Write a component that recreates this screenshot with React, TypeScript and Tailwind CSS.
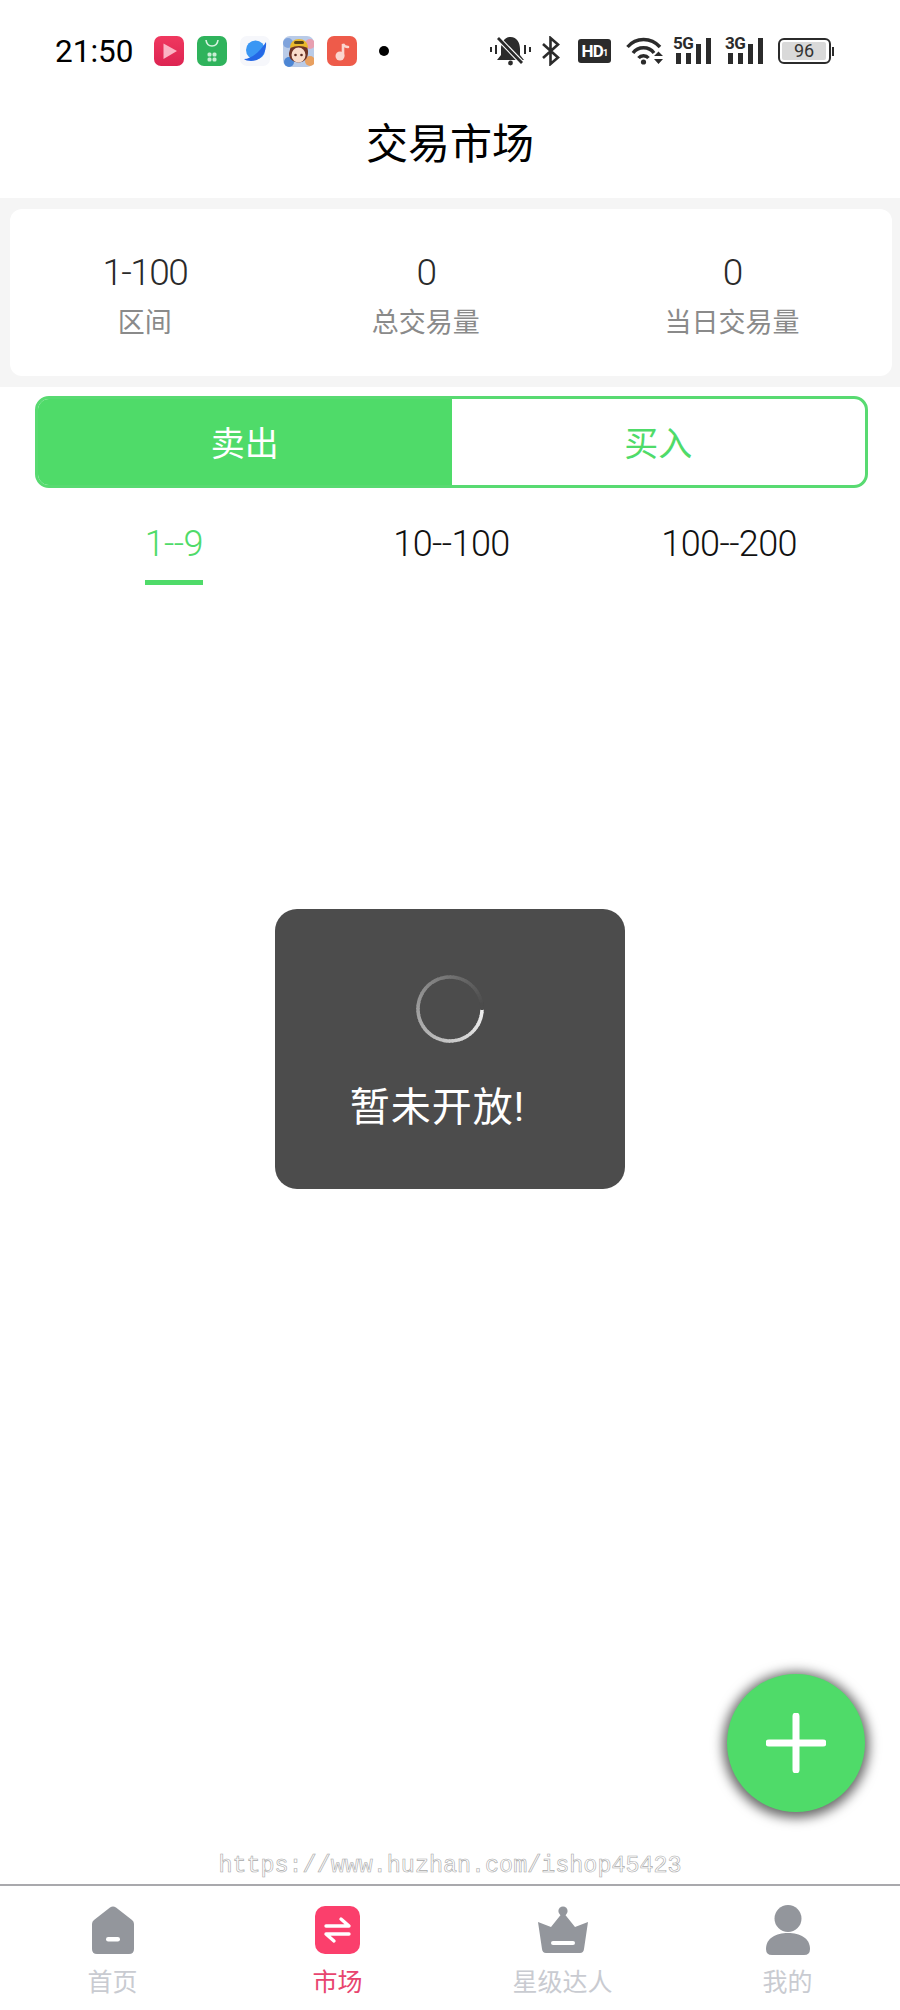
import React from "react";

const GREEN = "#4fdb69";

const stats = [
  { value: "1-100", label: "区间" },
  { value: "0", label: "总交易量" },
  { value: "0", label: "当日交易量" },
];

const ranges = ["1--9", "10--100", "100--200"];

function AppIcons() {
  return (
    <div className="ml-[21px] flex items-center gap-[13px]">
      <svg width="30" height="30" viewBox="0 0 30 30">
        <defs>
          <linearGradient id="vid" x1="0" y1="0" x2="0" y2="1">
            <stop offset="0" stopColor="#f0385f" />
            <stop offset="1" stopColor="#dd2452" />
          </linearGradient>
        </defs>
        <rect width="30" height="30" rx="7" fill="url(#vid)" />
        <path d="M9.5 7.5 L23 15 L9.5 23 Z" fill="#fbb4c4" strokeLinejoin="round" />
      </svg>
      <svg width="30" height="30" viewBox="0 0 30 30">
        <rect width="30" height="30" rx="7" fill="#2fb35c" />
        <path d="M9 4 C10 12 20 12 21 4" fill="none" stroke="#d8f3e0" strokeWidth="1.6" />
        <rect x="10.5" y="16.5" width="4" height="4" rx="1.5" fill="#c9eed5" />
        <rect x="15.5" y="16.5" width="4" height="4" rx="1.5" fill="#c9eed5" />
        <rect x="10.5" y="21.5" width="4" height="4" rx="1.5" fill="#c9eed5" />
        <rect x="15.5" y="21.5" width="4" height="4" rx="1.5" fill="#c9eed5" />
      </svg>
      <svg width="30" height="30" viewBox="0 0 30 30">
        <rect width="30" height="30" rx="7" fill="#f6f7fb" />
        <circle cx="15.5" cy="14" r="9.5" fill="#3a97f4" />
        <path d="M4 23 C11 23 20 16 26 6 C27 15 22 25 11 25 C8 25 5 24 4 23 Z" fill="#2467e6" />
      </svg>
      <svg width="31" height="31" viewBox="0 0 31 31">
        <rect width="31" height="31" rx="7" fill="#b9cbe8" />
        <circle cx="5" cy="7" r="5" fill="#7fa3dc" />
        <circle cx="27" cy="8" r="5" fill="#e79fb0" />
        <circle cx="6" cy="26" r="5" fill="#4c86d4" />
        <circle cx="27" cy="25" r="5" fill="#e8a060" />
        <path d="M6 17 C5 29 26 31 25 15 L24 10 L8 10 Z" fill="#6e3426" />
        <ellipse cx="15.5" cy="19" rx="7" ry="7.5" fill="#f9dccb" />
        <circle cx="12.5" cy="19" r="1.3" fill="#5b2a20" />
        <circle cx="18.5" cy="19" r="1.3" fill="#5b2a20" />
        <path d="M7 12 C7 0 25 0 25 12 Q16 8 7 12 Z" fill="#e9b92c" />
        <rect x="11" y="5" width="10" height="3" rx="1.5" fill="#5a4416" />
      </svg>
      <svg width="30" height="30" viewBox="0 0 30 30">
        <rect width="30" height="30" rx="7" fill="#ee5b4a" />
        <circle cx="13" cy="20" r="4.5" fill="#fbd5cf" />
        <path d="M16 20 V8 C17 10 19 11 21 11" fill="none" stroke="#fbd5cf" strokeWidth="2.6" strokeLinecap="round" />
      </svg>
      <span className="ml-[9px] h-[10px] w-[10px] rounded-full bg-black" />
    </div>
  );
}

function Signal({ label, className }: { label: string; className?: string }) {
  return (
    <div className={`relative h-[26px] w-[39px] ${className ?? ""}`}>
      <svg width="39" height="26" viewBox="0 0 39 26">
        <g fill="#2b2b2b">
          <rect x="3" y="15" width="5" height="11" />
          <rect x="13" y="15" width="5" height="11" />
          <rect x="23" y="6" width="5" height="20" />
          <rect x="33" y="0" width="5" height="26" />
        </g>
      </svg>
      <span className="absolute left-0 top-[-3px] text-[17px] font-bold leading-[17px] tracking-[-0.5px] text-[#2b2b2b]">
        {label}
      </span>
    </div>
  );
}

function SystemIcons() {
  return (
    <div className="flex items-center">
      <svg width="41" height="30" viewBox="0 0 41 30">
        <path d="M20.5 1 C27 1 30 7 30 13 V19 L34 24 H7 L11 19 V13 C11 7 14 1 20.5 1 Z" fill="#2b2b2b" />
        <circle cx="20.5" cy="27" r="2.4" fill="#2b2b2b" />
        <path d="M7 1 L33 28" stroke="#fff" strokeWidth="5" />
        <path d="M8 2 L32 27" stroke="#2b2b2b" strokeWidth="2.8" />
        <rect x="0" y="11" width="2" height="5" fill="#2b2b2b" />
        <rect x="5" y="9" width="2" height="9" fill="#2b2b2b" />
        <rect x="34" y="9" width="2" height="9" fill="#2b2b2b" />
        <rect x="39" y="11" width="2" height="5" fill="#2b2b2b" />
      </svg>
      <svg className="ml-[10px]" width="20" height="30" viewBox="0 0 20 30">
        <path d="M2 8 L17 21.5 L9.5 28 V2 L17 8.5 L2 22" fill="none" stroke="#2b2b2b" strokeWidth="2.6" />
      </svg>
      <div className="ml-[17px] flex h-[24px] w-[33px] items-center justify-center rounded-[3px] bg-[#2b2b2b] text-[17px] font-bold leading-none tracking-[-0.8px] text-white">
        HD<span className="mt-[4px] text-[9px]">1</span>
      </div>
      <svg className="ml-[15px]" width="38" height="28" viewBox="0 0 38 28">
        <g fill="none" stroke="#2b2b2b" strokeWidth="3.4">
          <path d="M1.5 10 C10 0 25 0 34 10" />
          <path d="M7 16 C12 9 23 9 28 16" />
          <path d="M12.5 21 C15 18 20 18 22.5 21" />
        </g>
        <circle cx="17.5" cy="25" r="2.6" fill="#2b2b2b" />
        <path d="M28 19 H37 L32.5 14.5 Z M28 22 H37 L32.5 27 Z" fill="#2b2b2b" />
      </svg>
      <Signal label="5G" className="ml-[9px]" />
      <Signal label="3G" className="ml-[13px]" />
      <div className="ml-[14px] flex items-center">
        <div className="flex h-[26px] w-[53px] items-center rounded-[6px] border-2 border-[#2b2b2b] p-[2px]">
          <span className="flex h-full w-[44px] items-center justify-center rounded-[2px] bg-[#d9d9d9] text-[18px] leading-none text-[#333]">
            96
          </span>
        </div>
        <span className="ml-[1px] h-[9px] w-[2px] bg-[#2b2b2b]" />
      </div>
    </div>
  );
}

function StatusBar() {
  return (
    <div className="flex h-[102px] items-center justify-between pl-[55px] pr-[66px]">
      <div className="flex items-center">
        <span className="pt-[2px] text-[31.5px] leading-none text-black">21:50</span>
        <AppIcons />
      </div>
      <SystemIcons />
    </div>
  );
}

// spinner is a ring that fades out going clockwise from 3 o'clock
function Spinner() {
  const count = 64;
  const r = 32;
  const arcs = Array.from({ length: count }, (_, i) => {
    const a0 = (i / count) * Math.PI * 2;
    const a1 = ((i + 1.3) / count) * Math.PI * 2;
    const t = Math.max(0, 1 - (i / count) * 1.03);
    const level = Math.round(0x4c + (0xf0 - 0x4c) * t);
    return {
      d: `M${40 + r * Math.cos(a0)} ${40 + r * Math.sin(a0)} A${r} ${r} 0 0 1 ${40 + r * Math.cos(a1)} ${40 + r * Math.sin(a1)}`,
      color: `rgb(${level},${level},${level})`,
    };
  });
  return (
    <svg width="80" height="80" viewBox="0 0 80 80">
      {arcs.map((arc, i) => (
        <path key={i} d={arc.d} fill="none" stroke={arc.color} strokeWidth="3.5" />
      ))}
    </svg>
  );
}

function Toast() {
  return (
    <div className="absolute left-[275px] top-[909px] flex h-[280px] w-[350px] flex-col items-center rounded-[22px] bg-[#4c4c4c] pt-[60px]">
      <Spinner />
      <span className="mr-[25px] mt-[34px] text-[40px] leading-[50px] tracking-[1px] text-white">暂未开放!</span>
    </div>
  );
}

function NavItem({ label, active, children }: { label: string; active?: boolean; children: React.ReactNode }) {
  return (
    <div className="flex flex-col items-center">
      <div className="flex h-[50px] items-center">{children}</div>
      <span className={`mt-[12px] text-[25px] leading-[32px] ${active ? "text-[#e8456f]" : "text-[#c9cbd1]"}`}>
        {label}
      </span>
    </div>
  );
}

function BottomNav() {
  return (
    <div className="grid h-[126px] grid-cols-4 border-t-2 border-[#a9a9ad] bg-white pt-[19px]">
      <NavItem label="首页">
        <svg width="44" height="48" viewBox="0 0 44 48">
          <path d="M19 1.5 Q22 -0.5 25 1.5 L41 14 Q43 15.5 43 18 V43 Q43 48 38 48 H6 Q1 48 1 43 V18 Q1 15.5 3 14 Z" fill="#93969c" />
          <rect x="15" y="31" width="14" height="4.5" rx="2.2" fill="#fff" />
        </svg>
      </NavItem>
      <NavItem label="市场" active>
        <svg width="45" height="48" viewBox="0 0 45 48">
          <rect width="45" height="48" rx="10" fill="#fb3f6c" />
          <g fill="none" stroke="#fff" strokeWidth="3.4" strokeLinecap="round" strokeLinejoin="round">
            <path d="M11 20 H34 L26 13" />
            <path d="M34 28 H11 L19 35" />
          </g>
        </svg>
      </NavItem>
      <NavItem label="星级达人">
        <svg width="50" height="48" viewBox="0 0 50 48">
          <circle cx="25" cy="5" r="4.6" fill="#93969c" />
          <path d="M0 16 L13 21 L25 6 L37 21 L50 16 L46 43 Q45.5 47 42 47 H8 Q4.5 47 4 43 Z" fill="#93969c" strokeLinejoin="round" />
          <rect x="13" y="35" width="24" height="4" rx="2" fill="#fff" />
        </svg>
      </NavItem>
      <NavItem label="我的">
        <svg width="44" height="50" viewBox="0 0 44 50">
          <circle cx="22" cy="13.5" r="13.5" fill="#93969c" />
          <path d="M0 44 C0 33 10 28 22 28 C34 28 44 33 44 44 Q44 50 38 50 H6 Q0 50 0 44 Z" fill="#93969c" />
        </svg>
      </NavItem>
    </div>
  );
}

export default function App() {
  return (
    <div className="relative flex h-[2010px] w-[900px] flex-col overflow-hidden bg-white font-['Roboto','Noto_Sans_CJK_SC',sans-serif]">
      <StatusBar />

      <div className="flex h-[96px] items-center justify-center pb-[10px]">
        <h1 className="text-[42px] leading-none text-black">交易市场</h1>
      </div>

      <div className="bg-[#f5f5f5] pb-[11px] pl-[10px] pr-[8px] pt-[11px]">
        <div className="flex h-[167px] items-center justify-around rounded-[12px] bg-white pt-[6px]">
          {stats.map((stat) => (
            <div key={stat.label} className="flex flex-col items-center">
              <span className="text-[37px] font-light leading-[44px] tracking-[-1.6px] text-[#2a2a2a]">{stat.value}</span>
              <span className="mt-[10px] text-[27px] leading-[36px] text-[#8a8a8a]">{stat.label}</span>
            </div>
          ))}
        </div>
      </div>

      <div className="ml-[35px] mr-[32px] mt-[9px] grid h-[92px] grid-cols-2 overflow-hidden rounded-[14px] border-[3px] border-[#58da71]">
        <div className="flex items-center justify-center bg-[#4fdb69] pt-[4px] text-[34px] text-white">卖出</div>
        <div className="flex items-center justify-center pt-[4px] text-[34px] text-[#4fdb69]">买入</div>
      </div>

      <div className="ml-[35px] mr-[32px] mt-[34px] grid grid-cols-3">
        {ranges.map((range, i) => (
          <div key={range} className="flex justify-center">
            <div className={`flex flex-col items-center border-b-[5px] pb-[14px] ${i === 0 ? "border-[#4fdb69]" : "border-transparent"}`}>
              <span className={`text-[36px] font-light leading-[44px] tracking-[-0.6px] ${i === 0 ? "text-[#4fdb69]" : "text-[#111]"}`}>{range}</span>
            </div>
          </div>
        ))}
      </div>

      <div className="flex flex-1 items-end justify-center pb-[2px]">
        <span className="font-['Liberation_Mono',monospace] text-[23.4px] leading-[32px] text-transparent [-webkit-text-stroke:0.6px_#a8a8a8]">
          https://www.huzhan.com/ishop45423
        </span>
      </div>

      <BottomNav />

      <Toast />

      <button
        type="button"
        className="absolute bottom-[198px] right-[35px] flex h-[138px] w-[138px] items-center justify-center rounded-full shadow-[0_2px_12px_4px_rgba(0,0,0,0.6)]"
        style={{ backgroundColor: GREEN }}
      >
        <svg width="60" height="60" viewBox="0 0 60 60">
          <path d="M30 3 V57 M3 30 H57" stroke="#fff" strokeWidth="7" strokeLinecap="round" />
        </svg>
      </button>
    </div>
  );
}
